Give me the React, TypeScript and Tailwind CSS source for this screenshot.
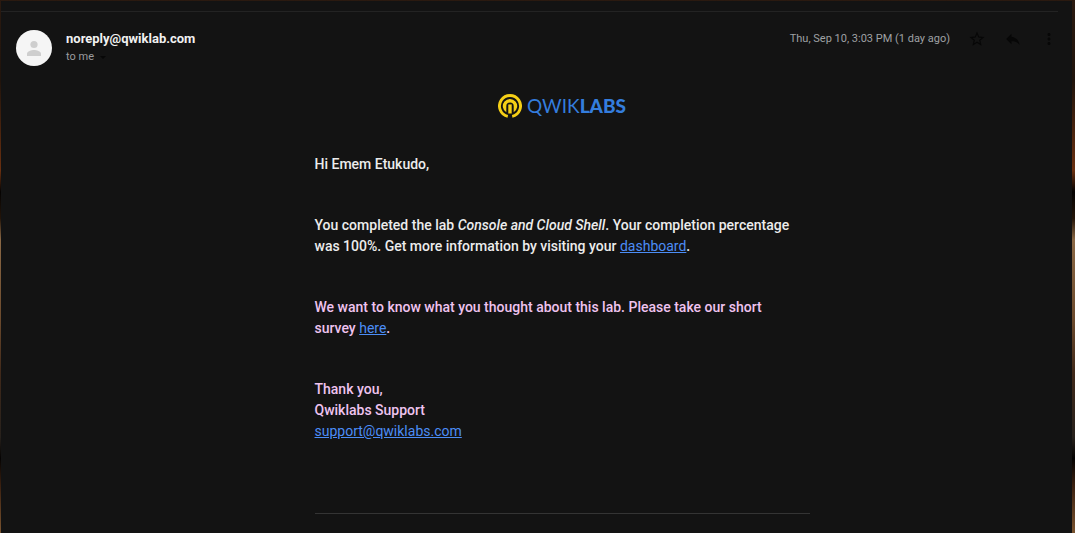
import type { ReactNode } from "react";

function Logo() {
  return (
    <div className="flex items-center justify-center gap-[5px]">
      <svg viewBox="0 0 24 24" className="size-6" fill="none" aria-hidden="true">
        <path d="M9.800 22.300A10.500 10.500 0 1 1 14.200 22.300" stroke="#f5cf16" strokeWidth="2.900" />
        <path
          d="M8.300 18.300A7.200 7.200 0 1 1 15.700 18.300V12.200A3.700 3.700 0 0 0 8.300 12.200Z"
          fill="#f5cf16"
        />
        <path d="M12 10.400V19.500" stroke="#f5cf16" strokeWidth="3.400" />
      </svg>
      <span className="font-[Lato,sans-serif] text-[19px] leading-6 text-[#347ddd]">
        <span className="font-normal">QWIK</span>
        <span className="font-black">LABS</span>
      </span>
    </div>
  );
}

function IconButton({ label, children }: { label: string; children: ReactNode }) {
  return (
    <button type="button" aria-label={label} className="flex size-5 items-center justify-center text-[#070707]">
      <svg viewBox="0 0 24 24" className="size-[18px]" fill="currentColor" aria-hidden="true">
        {children}
      </svg>
    </button>
  );
}

function MessageHeader() {
  return (
    <header className="flex items-start pt-[17px] pr-[13px] pl-[15px]">
      <div className="mt-px size-9 shrink-0 overflow-hidden rounded-full bg-[#f5f5f5]">
        <svg viewBox="0 0 36 36" className="size-9" fill="#cecece" aria-hidden="true">
          <circle cx="18" cy="14.5" r="3.6" />
          <path d="M11 26v-2.200c0-2.600 4.500-3.800 7-3.800s7 1.200 7 3.800V26z" />
        </svg>
      </div>
      <div className="ml-[14px]">
        <h1 className="text-[13px] leading-5 font-bold text-[#f1f1f1]">noreply@qwiklab.com</h1>
        <button type="button" className="flex items-center gap-1 text-[11px] leading-4 text-[#9a9c9f]">
          to me
          <svg viewBox="0 0 10 10" className="size-[10px]" fill="#070707" aria-hidden="true">
            <path d="M2 4h6L5 7z" />
          </svg>
        </button>
      </div>
      <div className="ml-auto flex items-center">
        <time className="mr-[17px] text-[11px] leading-5 text-[#9fa1a4]">Thu, Sep 10, 3:03 PM (1 day ago)</time>
        <div className="flex gap-4">
          <IconButton label="Star">
            <path d="M22 9.240l-7.190-.620L12 2 9.190 8.630 2 9.240l5.460 4.730L5.820 21 12 17.270 18.180 21l-1.630-7.030L22 9.240zM12 15.400l-3.760 2.270 1-4.280-3.320-2.880 4.380-.380L12 6.100l1.710 4.040 4.380.380-3.320 2.880 1 4.280L12 15.400z" />
          </IconButton>
          <IconButton label="Reply">
            <path d="M10 9V5l-7 7 7 7v-4.100c5 0 8.500 1.600 11 5.100-1-5-4-10-11-11z" />
          </IconButton>
          <IconButton label="More">
            <path d="M12 8c1.100 0 2-.900 2-2s-.900-2-2-2-2 .900-2 2 .900 2 2 2zm0 2c-1.100 0-2 .900-2 2s.900 2 2 2 2-.900 2-2-.900-2-2-2zm0 6c-1.100 0-2 .900-2 2s.900 2 2 2 2-.900 2-2-.900-2-2-2z" />
          </IconButton>
        </div>
      </div>
    </header>
  );
}

function TextLink({ href, children }: { href: string; children: ReactNode }) {
  return (
    <a href={href} className="font-normal text-[#4c8df6] underline">
      {children}
    </a>
  );
}

export default function App() {
  return (
    <div className="min-h-screen bg-[linear-gradient(to_bottom,#2b1a10_0%,#20140c_15%,#6a3010_32%,#050302_36%,#241509_41%,#8a6845_45%,#6b4a2d_60%,#40291a_70%,#27211c_82%,#050302_86%,#3a2010_91%,#7a5430_100%)] pt-px pr-[3px] pl-px font-[Roboto,sans-serif]">
      <main className="min-h-[calc(100vh-1px)] bg-[#131313] pt-[10px]">
        <hr className="mr-[14px] border-[#232323]" />
        <MessageHeader />
        <article className="mr-[14px] ml-[65px] pt-7">
          <div className="mx-auto max-w-[495px] text-sm leading-[21px] font-medium text-[#ececec]">
            <Logo />
            <div className="flex flex-col gap-10 pt-9 pr-4">
              <p>Hi Emem Etukudo,</p>
              <p>
                You completed the lab <em>Console and Cloud Shell</em>. Your completion percentage was 100%. Get more
                information by visiting your <TextLink href="#dashboard">dashboard</TextLink>.
              </p>
              <p className="text-[#efc3ef]">
                We want to know what you thought about this lab. Please take our short survey{" "}
                <TextLink href="#survey">here</TextLink>.
              </p>
              <p className="text-[#efc3ef]">
                Thank you,
                <br />
                Qwiklabs Support
                <br />
                <TextLink href="mailto:support@qwiklabs.com">support@qwiklabs.com</TextLink>
              </p>
            </div>
            <hr className="mt-[71px] border-[#343434]" />
          </div>
        </article>
      </main>
    </div>
  );
}
